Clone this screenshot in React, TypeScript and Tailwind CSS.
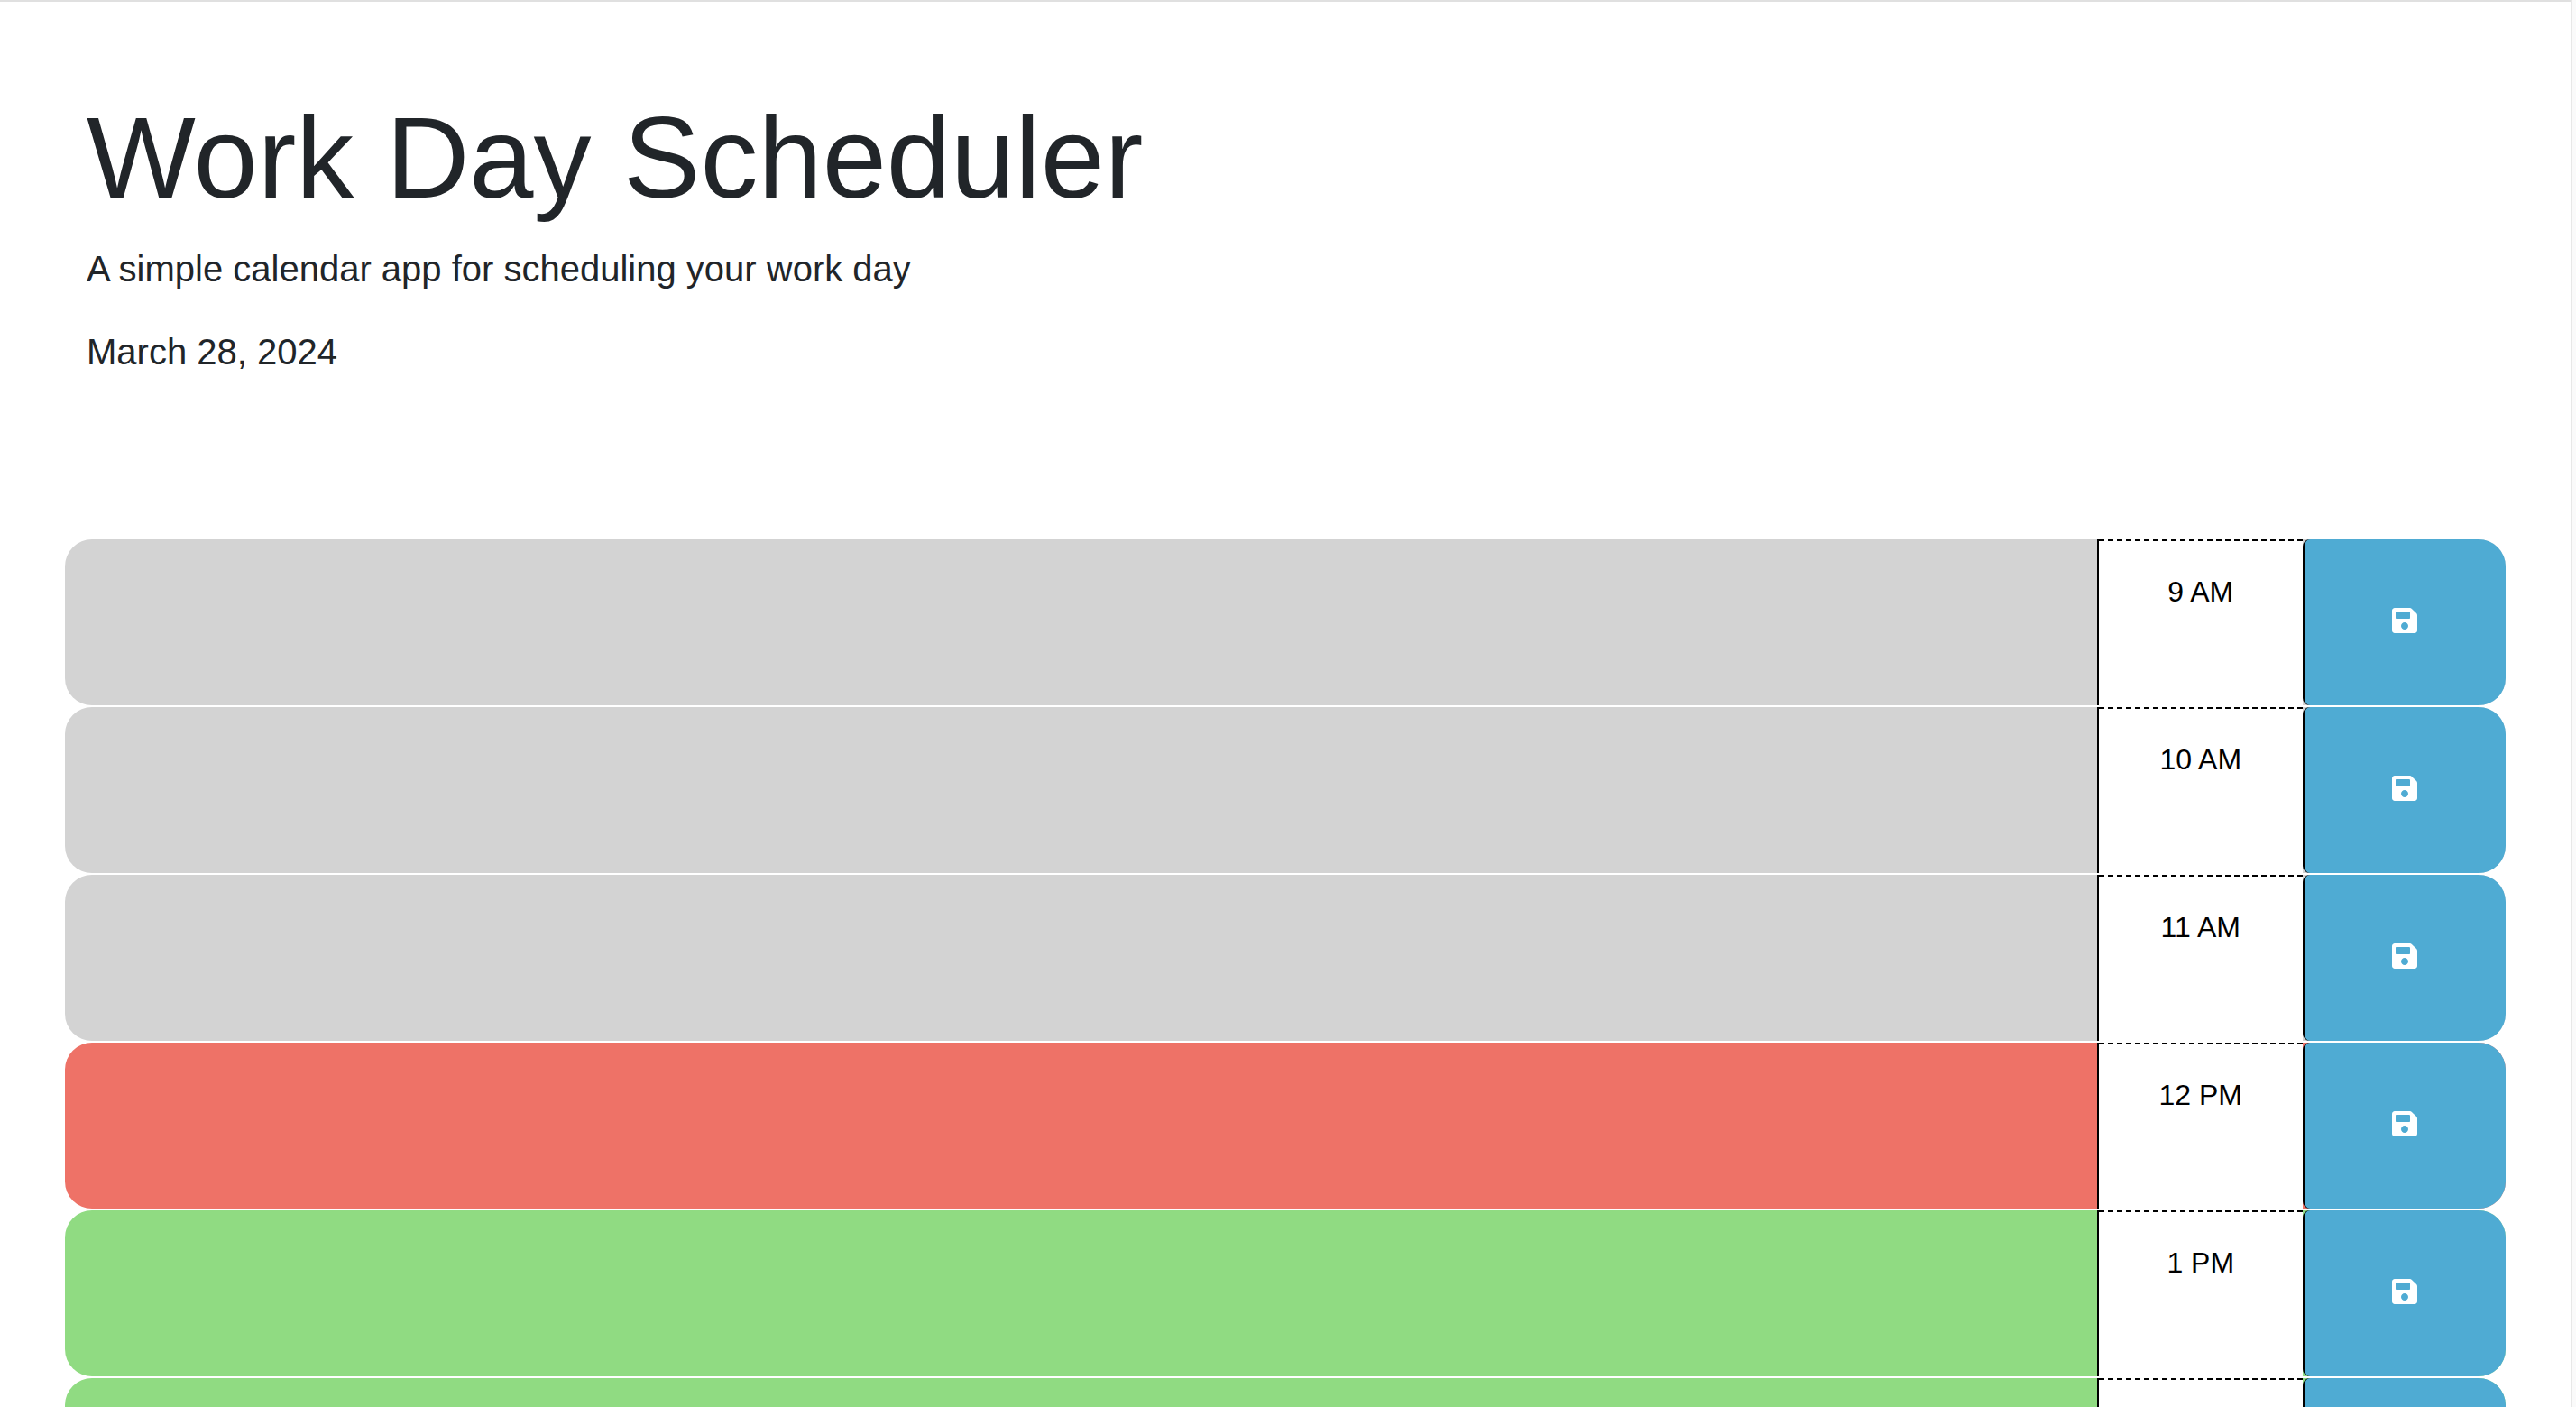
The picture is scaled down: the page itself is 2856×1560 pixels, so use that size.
import { FaSave } from 'react-icons/fa'

interface HourRow {
  label: string
  tone: string
}

const HOURS: HourRow[] = [
  { label: '9 AM', tone: 'bg-[#d3d3d3]' },
  { label: '10 AM', tone: 'bg-[#d3d3d3]' },
  { label: '11 AM', tone: 'bg-[#d3d3d3]' },
  { label: '12 PM', tone: 'bg-[#ee7267]' },
  { label: '1 PM', tone: 'bg-[#90db82]' },
  { label: '2 PM', tone: 'bg-[#90db82]' },
]

function TimeBlock({ label, tone }: HourRow) {
  return (
    <div className={`grid grid-cols-12 h-[184px] mb-[2px] rounded-[30px] ${tone}`}>
      <textarea
        aria-label={label}
        className="col-span-10 resize-none bg-transparent border-r-2 border-black rounded-l-[30px] outline-none"
      />
      <div className="col-span-1 bg-white border-t-2 border-dashed border-black pt-[32px] text-center text-[32px] leading-[48px] text-black">
        {label}
      </div>
      <button
        aria-label={`Save ${label}`}
        className="col-span-1 flex items-center justify-center bg-[#4fabd3] border-l-2 border-black rounded-l-[8px] rounded-r-[30px] text-white"
      >
        <FaSave size={32} className="-mt-1" />
      </button>
    </div>
  )
}

export default function App() {
  return (
    <div className="flex h-[1560px] overflow-hidden bg-white font-['Liberation_Sans',Arial,sans-serif]">
      <div className="flex-1 min-w-0 border-t-2 border-[#e0e0e0]">
        <header className="pl-[96px] pt-[96px] h-[596px] text-[#212529]">
          <h1 className="text-[128px] leading-[154px] font-light">Work Day Scheduler</h1>
          <p className="mt-[16px] text-[40px] leading-[60px] font-light">A simple calendar app for scheduling your work day</p>
          <p className="mt-[32px] text-[40px] leading-[60px] font-light">March 28, 2024</p>
        </header>
        <main className="px-[72px]">
          {HOURS.map((hour) => (
            <TimeBlock key={hour.label} {...hour} />
          ))}
        </main>
      </div>
      <div className="w-[6px] border-l-2 border-[#e8e8e8] bg-[#fafafa]" />
    </div>
  )
}
